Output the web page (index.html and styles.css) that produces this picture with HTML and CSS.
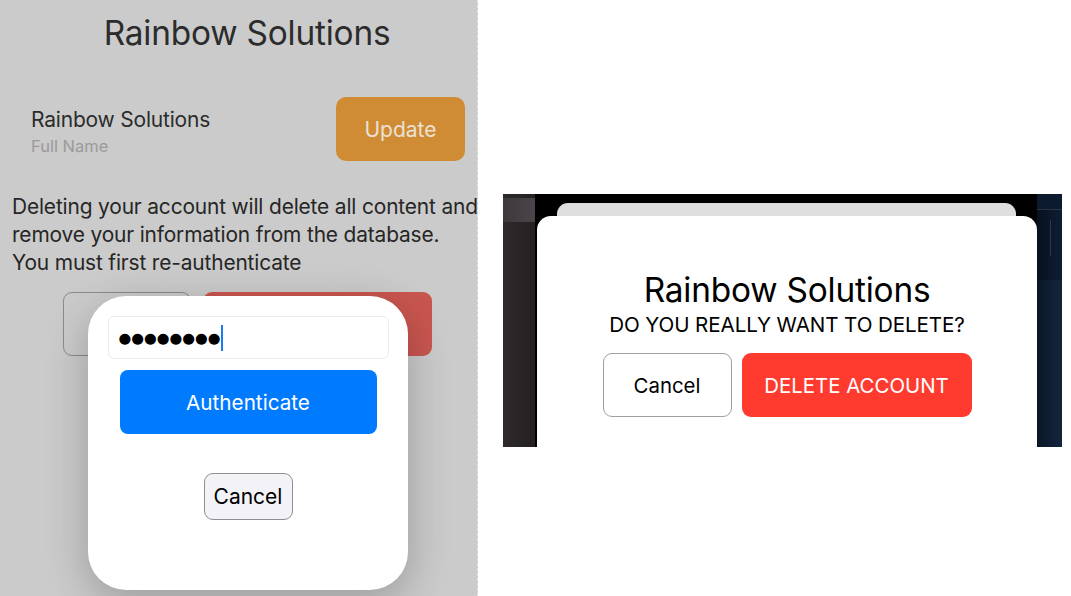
FILE: index.html
```html
<!DOCTYPE html>
<html>
<head>
<meta charset="utf-8">
<link rel="stylesheet" href="styles.css">
</head>
<body>
<div class="page">
  <section class="phone">
    <div class="phone-inner">
      <h1 class="title">Rainbow Solutions</h1>
      <div class="name-row">
        <div class="name-info">
          <div class="name">Rainbow Solutions</div>
          <div class="label">Full Name</div>
        </div>
        <button class="btn-update">Update</button>
      </div>
      <p class="warning">Deleting your account will delete all content and<br>remove your information from the database.<br>You must first re-authenticate</p>
      <div class="actions">
        <button class="btn-outline"></button>
        <button class="btn-danger-dim"></button>
      </div>
      <div class="auth-modal">
        <div class="pw-field"><span class="dots">●●●●●●●●</span><span class="caret"></span></div>
        <button class="btn-auth">Authenticate</button>
        <button class="btn-cancel-sm">Cancel</button>
      </div>
    </div>
  </section>
  <section class="desk">
    <div class="frame">
      <div class="side-left"><div class="side-band"></div></div>
      <div class="side-gap"></div>
      <div class="center">
        <div class="card-back"></div>
        <div class="card">
          <h2 class="card-title">Rainbow Solutions</h2>
          <div class="card-sub">DO YOU REALLY WANT TO DELETE?</div>
          <div class="card-actions">
            <button class="btn-cancel">Cancel</button>
            <button class="btn-delete">DELETE ACCOUNT</button>
          </div>
        </div>
      </div>
      <div class="side-right">
        <div class="sr-top"><div class="sr-line"></div></div>
        <div class="sr-bottom"></div>
      </div>
    </div>
  </section>
</div>
</body>
</html>
```

FILE: styles.css
```css
* { box-sizing: border-box; }
html, body { margin: 0; padding: 0; background: #fff; }
body { font-family: "Inter", "Liberation Sans", sans-serif; width: 1071px; height: 596px; overflow: hidden; }
button { font-family: inherit; cursor: default; }

.page { display: flex; height: 596px; }

.phone {
  width: 478px;
  height: 596px;
  background: #cbcbcb;
  overflow: hidden;
  flex: none;
  border-right: 1px dashed #e4e4e4;
}
.phone-inner { width: 494px; position: relative; height: 596px; }

.title {
  margin: 0;
  padding-top: 13px;
  text-align: center;
  font-size: 33.4px;
  font-weight: 400;
  color: #2c2c2c;
  line-height: 40px;
  letter-spacing: -0.2px;
}

.name-row {
  display: flex;
  justify-content: space-between;
  align-items: flex-start;
  padding: 44px 29px 0 31px;
}
.name-info { margin-top: 10px; }
.name { font-size: 21px; color: #2c2c2c; line-height: 26px; letter-spacing: -0.2px; }
.label { font-size: 16.5px; color: #9a9a9a; line-height: 22px; margin-top: 2px; }
.btn-update {
  width: 129px; height: 64px;
  border: none; border-radius: 10px;
  background: #cf8c35;
  color: #ece0d2;
  font-size: 21px;
}

.warning {
  margin: 32px 0 0 12px;
  font-size: 20.9px;
  line-height: 28px;
  color: #262626;
  white-space: nowrap;
  letter-spacing: -0.15px;
}

.actions { display: flex; justify-content: center; gap: 12px; margin-top: 15px; }
.btn-outline { width: 128px; height: 64px; border: 1.5px solid #8b8b8b; border-radius: 9px; background: transparent; }
.btn-danger-dim { width: 229px; height: 64px; border: none; border-radius: 9px; background: #c9564f; }

.auth-modal {
  position: absolute;
  left: 88px; top: 296px;
  width: 320px; height: 294px;
  background: #fff;
  border-radius: 38px;
  box-shadow: 0 12px 44px rgba(0,0,0,0.24);
  display: flex; flex-direction: column; align-items: center;
  padding-top: 20px;
}
.pw-field {
  width: 281px; height: 43px;
  border: 1px solid #ececec; border-radius: 6px;
  display: flex; align-items: center;
  padding-left: 10px;
}
.dots { font-size: 14.6px; letter-spacing: 0; color: #000; font-family: "DejaVu Sans", sans-serif; }
.caret { width: 2px; height: 26px; background: #1a7cf5; margin-left: 1px; }
.btn-auth {
  margin-top: 11px;
  width: 257px; height: 64px;
  border: none; border-radius: 8px;
  background: #007aff; color: #fff;
  font-size: 20.7px;
}
.btn-cancel-sm {
  margin-top: 39px;
  width: 89px; height: 47px;
  border: 1.5px solid #8e8e93; border-radius: 9px;
  background: #f2f2f7; color: #000;
  font-size: 21px;
}

.desk { flex: 1; padding: 194px 9px 0 25px; }
.frame {
  width: 559px; height: 253px;
  display: flex;
  background: #000;
}
.side-left { width: 32px; background: linear-gradient(90deg, #2e2a2c, #252123); padding-top: 4px; }
.side-band { height: 24px; background: linear-gradient(90deg, #3d383c, #4a454a); }
.side-gap { width: 2px; background: #000; }
.center { width: 500px; display: flex; flex-direction: column; padding-top: 9px; }
.card-back { height: 16px; margin: 0 21px 0 20px; background: #dfdfdf; border-radius: 11px 11px 0 0; }
.card {
  flex: 1;
  margin-top: -3px;
  background: #fff;
  border-radius: 14px 14px 0 0;
  display: flex; flex-direction: column; align-items: center;
  padding-top: 54px;
}
.card-title { margin: 0; font-size: 33.4px; font-weight: 400; line-height: 40px; color: #000; letter-spacing: -0.2px; }
.card-sub { font-size: 20.6px; line-height: 26px; color: #000; margin-top: 2px; letter-spacing: -0.1px; }
.card-actions { display: flex; gap: 10px; margin-top: 15px; }
.btn-cancel {
  width: 129px; height: 64px;
  border: 1.5px solid #a0a0a0; border-radius: 9px;
  background: #fff; color: #000; font-size: 20.4px;
}
.btn-delete {
  width: 230px; height: 64px;
  border: none; border-radius: 9px;
  background: #ff3b30; color: #fff; font-size: 20.4px;
}
.side-right { width: 25px; display: flex; flex-direction: column; background: #0c1a2e; }
.sr-top { height: 71px; border-top: 1px solid #263447; margin-top: 15px; position: relative; background: linear-gradient(90deg, #06111f, #0f1e33); }
.sr-line { position: absolute; left: 13px; top: 10px; width: 1px; height: 36px; background: #2a3a50; }
.sr-bottom { flex: 1; background: linear-gradient(90deg, #0a1628, #13253e); }
```
